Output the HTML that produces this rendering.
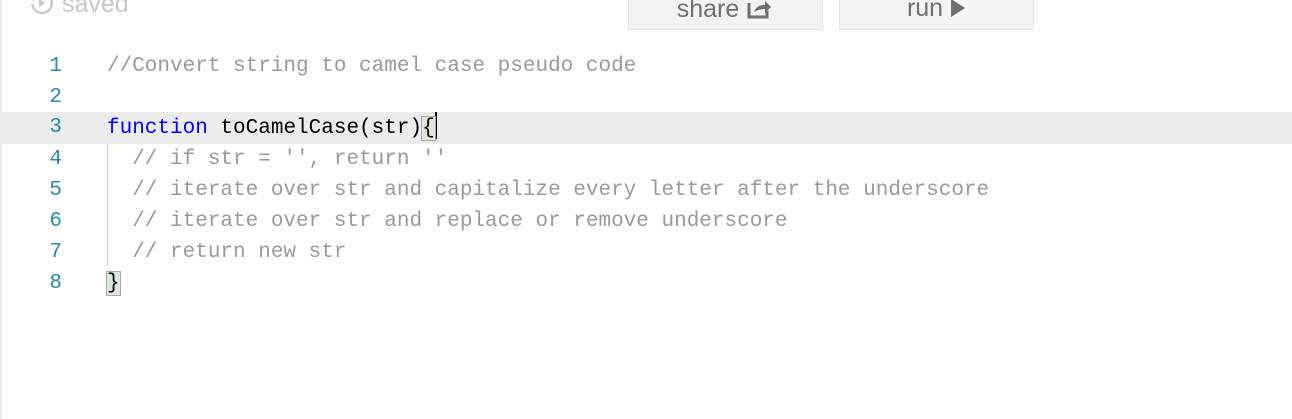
<!DOCTYPE html>
<html><head><meta charset="utf-8"><style>
html,body{margin:0;padding:0;width:1292px;height:419px;overflow:hidden;background:#fefefd;}
body{position:relative;font-family:"Liberation Sans",sans-serif;}
.lb{position:absolute;left:0;top:0;width:2px;height:419px;background:#ececec;}
.saved{position:absolute;left:28px;top:-10px;color:#c8c8c8;font-size:25px;}
.btn{position:absolute;top:-2px;height:30px;background:#f3f3f3;border:1px solid #e4e4e4;color:#6f6f6f;font-size:25px;text-align:center;line-height:16px;}
.code{position:absolute;left:0;top:51px;width:1292px;font-family:"Liberation Mono","DejaVu Sans Mono",monospace;font-size:21px;}
.ln{position:relative;height:31px;line-height:31px;white-space:pre;}
.ln .n{position:absolute;left:0;width:62px;text-align:right;color:#2a8aa8;}
.ln .t{position:absolute;left:107px;color:#000;}
.ln .t.c{color:#9a9a9a}
.k{color:#0000ff}
.hl{background:#ececec;}
.br{outline:1px solid #aaa;background:#dfe6dc;}
.guide{position:absolute;left:107px;top:142px;width:1px;height:124px;background:#d0d0d0;}
.cur{display:inline-block;width:2px;height:27px;background:#000;vertical-align:-6px;}
</style></head><body>
<div class="lb"></div>
<div class="saved"><svg width="26" height="26" viewBox="0 0 24 24" style="vertical-align:-4px;margin-right:8px"><path d="M5 8a9 9 0 1 1-1 5" fill="none" stroke="#c8c8c8" stroke-width="2.2"/><path d="M2 5l3 4 4-3" fill="none" stroke="#c8c8c8" stroke-width="2"/><path d="M10 8l6 4-6 4z" fill="#c8c8c8"/></svg>saved</div>
<div class="btn" style="left:628px;width:193px;">share <svg width="28" height="20" viewBox="0 0 26 20" style="vertical-align:-2px"><path d="M2 4v14h18v-6" fill="none" stroke="#6f6f6f" stroke-width="3"/><path d="M7 13c2-6 7-7 11-7V2l6 6-6 6V10c-4 0-8 1-11 3z" fill="#6f6f6f"/></svg></div>
<div class="btn" style="left:839px;width:193px;">run <svg width="16" height="18" viewBox="0 0 16 18" style="vertical-align:-1px"><path d="M1 0l14 9-14 9z" fill="#6f6f6f"/></svg></div>
<div class="guide"></div>
<div class="code">
<div class="ln"><span class="n">1</span><span class="t c">//Convert string to camel case pseudo code</span></div>
<div class="ln"><span class="n">2</span></div>
<div class="ln hl" style="margin-top:-1px;height:32px"><span class="n">3</span><span class="t"><span class="k">function</span> toCamelCase(str)<span class="br">{</span><span class="cur"></span></span></div>
<div class="ln"><span class="n">4</span><span class="t c">  // if str = '', return ''</span></div>
<div class="ln"><span class="n">5</span><span class="t c">  // iterate over str and capitalize every letter after the underscore</span></div>
<div class="ln"><span class="n">6</span><span class="t c">  // iterate over str and replace or remove underscore</span></div>
<div class="ln"><span class="n">7</span><span class="t c">  // return new str</span></div>
<div class="ln"><span class="n">8</span><span class="t"><span class="br">}</span></span></div>
</div>
</body></html>
